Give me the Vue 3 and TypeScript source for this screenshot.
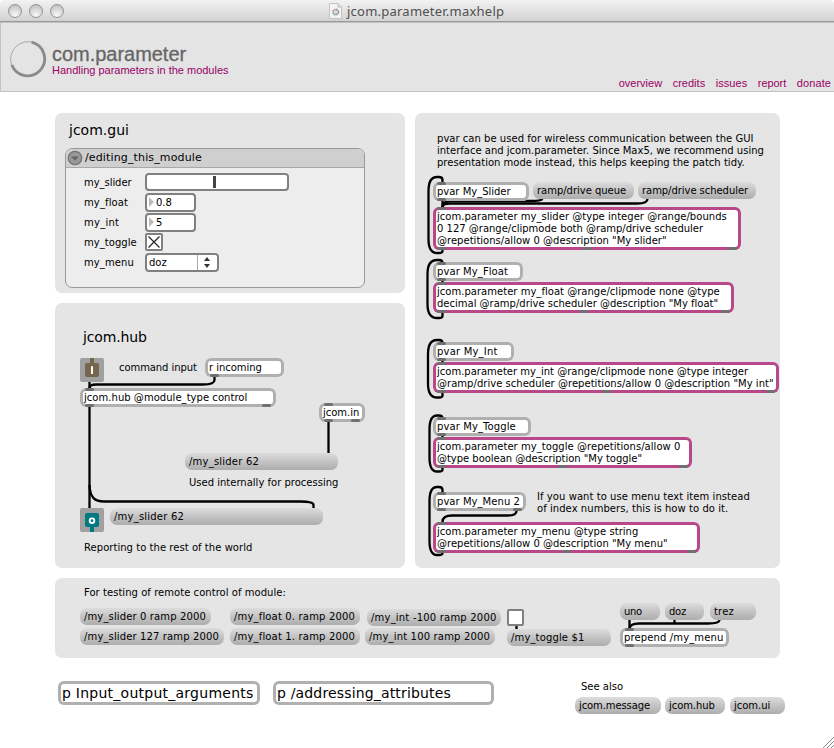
<script setup lang="ts">
type Kind = 'comment' | 'object' | 'param' | 'message' | 'title' | 'big'
type Line = [text: string, width: number]

interface PatchNode {
  kind: Kind
  x: number
  y: number
  w?: number
  lines: Line[]
  ins?: number[]
  outs?: number[]
}

const sans = '"DejaVu Sans", Verdana, sans-serif'
const arial = '"Liberation Sans", Arial, sans-serif'
const humanist = '"Noto Sans", "Open Sans", sans-serif'

const pen = document.createElement('canvas').getContext('2d')!

// Letter spacing that makes a run of text cover the given width.
function fit(text: string, width: number, size = 10, family = sans) {
  pen.font = `${size}px ${family}`
  const m = pen.measureText(text)
  const ink = m.actualBoundingBoxRight + m.actualBoundingBoxLeft
  return { letterSpacing: `${((width - ink) / (text.length - 1)).toFixed(3)}px` }
}

const originY = 92

function place(n: PatchNode) {
  return { left: `${n.x}px`, top: `${n.y - originY}px`, width: n.w ? `${n.w}px` : 'auto' }
}

function sizeOf(kind: Kind) {
  return kind === 'title' || kind === 'big' ? 14 : 10
}

const param = (y: number, w: number, lines: Line[]): PatchNode => ({
  kind: 'param', x: 433, y, w, lines, ins: [4], outs: [4, w / 2 - 4.5, w - 13],
})
const pvar = (y: number, w: number, text: string, tw: number, extra = false): PatchNode => ({
  kind: 'object', x: 433, y, w, lines: [[text, tw]], ins: [4], outs: extra ? [4, w - 13] : [4],
})
const msg = (x: number, y: number, w: number, text: string, tw: number): PatchNode => ({
  kind: 'message', x, y, w, lines: [[text, tw]],
})
const note = (x: number, y: number, ...lines: Line[]): PatchNode => ({ kind: 'comment', x, y, lines })

const nodes: PatchNode[] = [
  { kind: 'title', x: 69, y: 122, lines: [['jcom.gui', 60]] },
  { kind: 'title', x: 83, y: 329, lines: [['jcom.hub', 65]] },

  note(119, 362, ['command input', 78]),
  { kind: 'object', x: 205, y: 358, w: 79, lines: [['r incoming', 52.5]], outs: [5] },
  { kind: 'object', x: 80, y: 388, w: 196, lines: [['jcom.hub @module_type control', 163.5]], ins: [5], outs: [5, 182] },
  { kind: 'object', x: 319, y: 403, w: 46, lines: [['jcom.in', 37]], ins: [5], outs: [5, 32] },
  msg(185, 453, 153, '/my_slider 62', 69.5),
  note(189, 477, ['Used internally for processing', 149]),
  msg(110, 508, 213, '/my_slider 62', 69.5),
  note(84, 542, ['Reporting to the rest of the world', 168]),

  note(437, 133,
    ['pvar can be used for wireless communication between the GUI', 315.5],
    ['interface and jcom.parameter. Since Max5, we recommend using', 326.5],
    ['presentation mode instead, this helps keeping the patch tidy.', 307.5]),
  pvar(182, 96, 'pvar My_Slider', 74.5),
  msg(533, 182, 101, 'ramp/drive queue', 89),
  msg(638, 182, 118, 'ramp/drive scheduler', 107),
  param(207, 308, [
    ['jcom.parameter my_slider @type integer @range/bounds', 290.5],
    ['0 127 @range/clipmode both @ramp/drive scheduler', 267],
    ['@repetitions/allow 0 @description "My slider"', 229],
  ]),
  pvar(262, 90, 'pvar My_Float', 71),
  param(282, 301, [
    ['jcom.parameter my_float @range/clipmode none @type', 283.5],
    ['decimal @ramp/drive scheduler @description "My float"', 280.5],
  ]),
  pvar(342, 81, 'pvar My_Int', 60.5),
  param(362, 346, [
    ['jcom.parameter my_int @range/clipmode none @type integer', 313],
    ['@ramp/drive scheduler @repetitions/allow 0 @description "My int"', 336],
  ]),
  pvar(417, 98, 'pvar My_Toggle', 78.5),
  param(437, 259, [
    ['jcom.parameter my_toggle @repetitions/allow 0', 244],
    ['@type boolean @description "My toggle"', 204.5],
  ]),
  pvar(492, 93, 'pvar My_Menu 2', 82.5, true),
  note(537, 491, ['If you want to use menu text item instead', 212.5], ['of index numbers, this is how to do it.', 191]),
  param(522, 267, [
    ['jcom.parameter my_menu @type string', 202],
    ['@repetitions/allow 0 @description "My menu"', 230],
  ]),

  note(84, 587, ['For testing of remote control of module:', 201.5]),
  msg(80, 608, 131, '/my_slider 0 ramp 2000', 121.5),
  msg(80, 628, 144, '/my_slider 127 ramp 2000', 134.5),
  msg(230, 608, 130, '/my_float 0. ramp 2000', 120.5),
  msg(230, 628, 130, '/my_float 1. ramp 2000', 120.5),
  msg(367, 609, 134, '/my_int -100 ramp 2000', 125),
  msg(365, 628, 130, '/my_int 100 ramp 2000', 120.5),
  msg(507, 629, 104, '/my_toggle $1', 73),
  msg(620, 603, 40, 'uno', 18),
  msg(665, 603, 39, 'doz', 17),
  msg(710, 603, 46, 'trez', 19.5),
  { kind: 'object', x: 620, y: 628, w: 109, lines: [['prepend /my_menu', 99]], ins: [5], outs: [5] },

  { kind: 'big', x: 58, y: 681, w: 202, lines: [['p Input_output_arguments', 190]] },
  { kind: 'big', x: 273, y: 681, w: 221, lines: [['p /addressing_attributes', 172.5]] },
  note(581, 681, ['See also', 42]),
  msg(575, 697, 86, 'jcom.message', 72),
  msg(665, 697, 60, 'jcom.hub', 46.5),
  msg(730, 697, 55, 'jcom.ui', 36.5),
]

const bracket = (left: number, top: number, inlet: number, outlet: number, bottom: number) =>
  `M442.5 ${outlet}V${bottom - 2}Q442.5 ${bottom} 439 ${bottom}H437Q${left} ${bottom} ${left} ${bottom - 14}` +
  `V${top + 14}Q${left} ${top} 437 ${top}H439Q442.5 ${top} 442.5 ${top + 3}V${inlet}`

const cables: string[] = [
  bracket(428.5, 177, 183, 249, 253),
  bracket(427.5, 260, 263, 312, 318),
  bracket(428, 340, 343, 392, 397.5),
  bracket(429.5, 415.5, 418, 467, 471.5),
  bracket(429.5, 487, 493, 552, 555),
  'M442.5 201V207',
  'M542.5 199Q541 201 531 201H452Q442.5 201 442.5 207',
  'M647.5 199Q647.5 203.5 637 203.5H450Q442.5 203.5 442.5 207',
  'M442.5 280V283',
  'M442.5 360V363',
  'M442.5 435V438',
  'M516.5 511Q516.5 515.5 508 515.5H452Q442.5 515.5 442.5 522',
  'M89.5 382V388',
  'M214.5 376V380Q214.5 384.5 203 384.5H96Q89.5 384.5 89.5 388',
  'M89.5 406V508',
  'M89.5 485C90 498 95 501.5 104 501.5H300Q313.5 501.5 313.5 505V508',
  'M328.5 421V453',
  'M516.5 625V629',
  'M629.5 620V629',
  'M674.5 620V623',
  'M719.5 620Q719.5 623.5 708 623.5H639Q629.5 623.5 629.5 629',
]

const links: Line[] = [['overview', 43.5], ['credits', 33], ['issues', 32], ['report', 28.5], ['donate', 34]]

const fields = [
  { label: 'my_slider', width: 48.5, control: 'slider' },
  { label: 'my_float', width: 44, control: 'number', value: '0.8' },
  { label: 'my_int', width: 35, control: 'number', value: '5' },
  { label: 'my_toggle', width: 52.5, control: 'toggle' },
  { label: 'my_menu', width: 49.5, control: 'menu', value: 'doz' },
]
</script>

<template>
  <div class="window">
    <div class="titlebar">
      <div class="lights"><i v-for="n in 3" :key="n" class="light"></i></div>
      <svg class="doc" width="13" height="16" viewBox="0 0 13 16">
        <path d="M.5 .5H9L12.5 4V15.5H.5Z" fill="#f4f4f4" stroke="#c4c4c4" />
        <path d="M9 .5V4H12.5" fill="#ddd" stroke="#bbb" />
        <circle cx="6.8" cy="9" r="2.7" fill="#ddd" stroke="#999" stroke-width="1.7" stroke-dasharray="1.6 .5" />
        <path d="M3.2 7.5L4.7 8.5" stroke="#e6a888" stroke-width="1.2" />
        <path d="M3.5 10.5L5 11.5" stroke="#8acbd6" stroke-width="1.2" />
      </svg>
      <span class="filename" :style="fit('jcom.parameter.maxhelp', 158, 13, humanist)">jcom.parameter.maxhelp</span>
    </div>

    <header class="banner">
      <svg class="ring" width="38" height="38" viewBox="0 0 38 38" fill="none">
        <circle cx="19" cy="19" r="17.3" stroke="#a8a8a8" stroke-width="1" />
        <path d="M22.5 2.2A17 17 0 1 1 2.8 25" stroke="#8b8b8b" stroke-width="2.8" />
      </svg>
      <div class="heading">
        <div class="name" :style="fit('com.parameter', 134.5, 20, arial)">com.parameter</div>
        <div class="tagline" :style="fit('Handling parameters in the modules', 177, 11, arial)">Handling parameters in the modules</div>
      </div>
      <nav class="links">
        <a v-for="[text, w] in links" :key="text" :style="fit(text, w, 11, arial)">{{ text }}</a>
      </nav>
    </header>

    <main class="patcher">
      <div class="panels">
        <section class="panel gui">
          <div class="module">
            <div class="module-head">
              <svg width="16" height="16" viewBox="0 0 16 16">
                <circle cx="8" cy="8" r="6.7" fill="#999" stroke="#737373" stroke-width="1.3" />
                <path d="M4 6.5H12L8 10.7Z" fill="#666" />
              </svg>
              <span :style="fit('/editing_this_module', 117, 11)">/editing_this_module</span>
            </div>
            <div class="module-body">
              <div v-for="f in fields" :key="f.label" class="field">
                <span class="label" :style="fit(f.label, f.width)">{{ f.label }}</span>
                <div v-if="f.control === 'slider'" class="ctl slider"><i class="thumb"></i></div>
                <div v-else-if="f.control === 'number'" class="ctl number">
                  <i class="tri"></i><span>{{ f.value }}</span>
                </div>
                <div v-else-if="f.control === 'toggle'" class="ctl check">
                  <svg width="14" height="14" viewBox="0 0 14 14"><path d="M1.5 1.5L12.5 12.5M12.5 1.5L1.5 12.5" stroke="#222" stroke-width="1.2" /></svg>
                </div>
                <div v-else class="ctl menu">
                  <span class="choice">{{ f.value }}</span>
                  <svg class="arrows" width="18" height="15" viewBox="0 0 18 15"><path d="M6 6L9 2L12 6ZM6 9L9 13L12 9Z" fill="#333" /></svg>
                </div>
              </div>
            </div>
          </div>
        </section>
        <section class="panel hub"></section>
        <section class="panel params"></section>
        <section class="panel remote"></section>
      </div>

      <svg class="cables" width="834" height="656" viewBox="0 92 834 656">
        <path v-for="d in cables" :key="d" :d="d" />
      </svg>

      <div v-for="(n, i) in nodes" :key="i" class="node" :class="n.kind" :style="place(n)">
        <i v-for="p in n.ins" :key="'i' + p" class="port in" :style="{ left: p + 'px' }"></i>
        <i v-for="p in n.outs" :key="'o' + p" class="port out" :style="{ left: p + 'px' }"></i>
        <div v-for="[text, w] in n.lines" :key="text" class="line" :style="fit(text, w, sizeOf(n.kind))">{{ text }}</div>
      </div>

      <svg class="jack inlet" width="24" height="24" viewBox="0 0 24 24">
        <rect width="24" height="24" rx="2" fill="#a0a0a0" />
        <path d="M10 0H14V5H17Q19 5 19 7V17Q19 19 17 19H7Q5 19 5 17V7Q5 5 7 5H10Z" fill="#75674c" />
        <path d="M11 8.3H13V16H11Z" fill="#fff" />
      </svg>
      <svg class="jack outlet" width="24" height="24" viewBox="0 0 24 24">
        <rect width="24" height="24" rx="2" fill="#a0a0a0" />
        <path d="M7 5H17Q19 5 19 7V17Q19 19 17 19H14V24H10V19H7Q5 19 5 17V7Q5 5 7 5Z" fill="#007a82" />
        <circle cx="12" cy="12.7" r="2.3" fill="none" stroke="#fff" stroke-width="1.9" />
      </svg>
      <div class="remote-toggle"></div>

      <svg class="grip" width="11" height="11" viewBox="0 0 11 11">
        <path d="M0 11L11 0M4 11L11 4M8 11L11 8" stroke="#888" stroke-width="1" />
      </svg>
    </main>
  </div>
</template>

<style>
body {
  margin: 0;
  background: #fff;
}
</style>

<style scoped>
.window {
  width: 834px;
  height: 748px;
  display: flex;
  flex-direction: column;
  overflow: hidden;
  background: #fff;
  color: #000;
  font: 10px/12px "DejaVu Sans", Verdana, sans-serif;
  white-space: pre;
}
.titlebar {
  box-sizing: border-box;
  height: 22px;
  display: flex;
  align-items: center;
  padding-left: 8px;
  border-bottom: 1px solid #999;
  border-radius: 4px 4px 0 0;
  background: linear-gradient(#f2f2f2, #e6e6e6 40%, #d2d2d2);
}
.lights {
  display: flex;
  gap: 7px;
  width: 321px;
}
.light {
  box-sizing: border-box;
  width: 14px;
  height: 14px;
  border: 1px solid #949494;
  border-radius: 50%;
  background: radial-gradient(circle at 50% 85%, #fafafa 0, #dcdcdc 45%, #b8b8b8 100%);
}
.filename {
  margin-left: 5px;
  font: 13px/18px "Noto Sans", "Open Sans", sans-serif;
  color: #505050;
}
.banner {
  box-sizing: border-box;
  height: 70px;
  display: flex;
  padding-left: 8px;
  border: 1px solid #c2c2c2;
  border-right: 0;
  background: #e4e4e4;
  font-family: "Liberation Sans", Arial, sans-serif;
}
.ring {
  margin-top: 17px;
}
.heading {
  margin: 22px 0 0 5px;
  flex: 1;
}
.name {
  font-size: 20px;
  line-height: 19px;
  color: #666;
  -webkit-text-stroke: 0.3px #666;
}
.tagline {
  font-size: 11px;
  line-height: 12px;
  color: #990066;
}
.links {
  display: flex;
  align-items: flex-end;
  gap: 10.5px;
  padding: 0 3px 2px 0;
  font-size: 11px;
  line-height: 12px;
  color: #990066;
}
.patcher {
  position: relative;
  flex: 1;
}
.panels {
  display: grid;
  grid-template: 180px 265px 80px / 350px 365px;
  gap: 10px;
  padding: 21px 0 0 55px;
}
.panel {
  border-radius: 7px;
  background: #e5e5e5;
}
.params {
  grid-area: 1 / 2 / 3 / 3;
}
.hub {
  grid-area: 2 / 1;
}
.remote {
  grid-area: 3 / 1 / 4 / 3;
}
.module {
  box-sizing: border-box;
  width: 300px;
  height: 140px;
  margin: 35px 0 0 10px;
  border: 1px solid #999;
  border-radius: 7px;
  overflow: hidden;
  background: #ededed;
}
.module-head {
  box-sizing: border-box;
  height: 19px;
  display: flex;
  align-items: center;
  gap: 2px;
  padding-left: 1px;
  border-bottom: 1px solid #a8a8a8;
  background: #cfcfcf;
  font-size: 11px;
}
.module-body {
  padding: 4px 0 0 18px;
}
.field {
  display: flex;
  align-items: center;
  height: 20px;
}
.label {
  width: 61px;
  padding-top: 1px;
}
.ctl {
  box-sizing: border-box;
  display: flex;
  align-items: center;
  height: 19px;
  border: 2px solid #808080;
  border-radius: 4px;
  background: #fff;
}
.ctl span {
  padding-top: 1px;
}
.slider {
  width: 144px;
  height: 18px;
  padding-left: 66px;
}
.thumb {
  width: 3px;
  height: 12px;
  background: #444;
}
.number {
  width: 51px;
  padding-left: 2px;
  gap: 2px;
}
.tri {
  border: 5px solid transparent;
  border-left: 5px solid #bbb;
  border-right: 0;
}
.check {
  width: 18px;
  height: 18px;
  border-radius: 2px;
}
.menu {
  width: 74px;
}
.choice {
  width: 48px;
  padding-left: 2px;
}
.arrows {
  border-left: 1px solid #aaa;
}
.cables {
  position: absolute;
  left: 0;
  top: 0;
  fill: none;
  stroke: #000;
  stroke-width: 2.3;
}
.node {
  position: absolute;
  box-sizing: border-box;
}
.object,
.param,
.big {
  border-radius: 6px;
  background: #fff;
  padding: 4px 0 3px 4px;
  box-shadow: inset 0 0 0 3px #b0b0b0;
}
.param {
  box-shadow: inset 0 0 0 3px #b8488a;
}
.message {
  height: 17px;
  padding: 3px 0 0 4px;
  border-radius: 7px;
  background: linear-gradient(#dcdcdc, #c4c4c4 50%, #adadad);
}
.title,
.big {
  font-size: 14px;
  line-height: 17px;
}
.port {
  position: absolute;
  width: 9px;
  height: 3px;
  border-radius: 1.5px;
  background: #707070;
}
.in {
  top: 0;
}
.out {
  bottom: 0;
}
.jack {
  position: absolute;
  left: 80px;
}
.inlet {
  top: 266px;
}
.outlet {
  top: 416px;
}
.remote-toggle {
  position: absolute;
  box-sizing: border-box;
  left: 507px;
  top: 517px;
  width: 17px;
  height: 17px;
  border: 2px solid #808080;
  border-radius: 2px;
  background: #fff;
}
.grip {
  position: absolute;
  right: 0;
  bottom: 0;
}
</style>
